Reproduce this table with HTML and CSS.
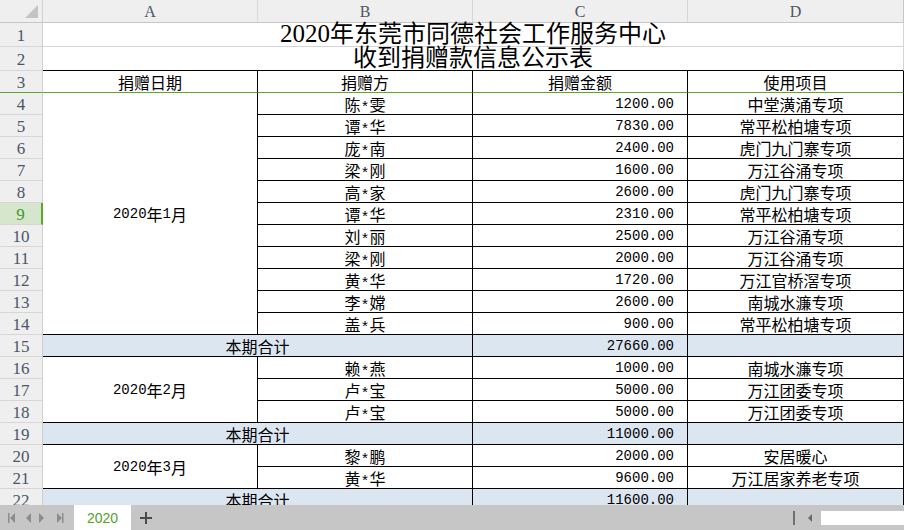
FILE: index.html
```html
<!DOCTYPE html>
<html lang="zh-CN">
<head>
<meta charset="utf-8">
<title>2020</title>
<link rel="stylesheet" href="styles.css">
</head>
<body>
<div class="app">
  <div class="sheet">
    <div class="corner"><span class="tri"></span></div>
    <div class="ch">A</div><div class="ch">B</div><div class="ch">C</div><div class="ch last">D</div>

    <div class="rh">1</div>
    <div class="title t1"><span class="lat">2020</span>年东莞市同德社会工作服务中心</div>
    <div class="rh">2</div>
    <div class="title t2">收到捐赠款信息公示表</div>

    <div class="rh hdr">3</div>
    <div class="c hd">捐赠日期</div><div class="c hd">捐赠方</div><div class="c hd">捐赠金额</div><div class="c hd">使用项目</div>

    <div class="rh">4</div>
    <div class="c date span11"><span class="n">2020</span>年<span class="n">1</span>月</div>
    <div class="c ctr">陈<span class="ast">*</span>雯</div><div class="c amt"><span class="n">1200.00</span></div><div class="c ctr">中堂潢涌专项</div>
    <div class="rh">5</div>
    <div class="c ctr">谭<span class="ast">*</span>华</div><div class="c amt"><span class="n">7830.00</span></div><div class="c ctr">常平松柏塘专项</div>
    <div class="rh">6</div>
    <div class="c ctr">庞<span class="ast">*</span>南</div><div class="c amt"><span class="n">2400.00</span></div><div class="c ctr">虎门九门寨专项</div>
    <div class="rh">7</div>
    <div class="c ctr">梁<span class="ast">*</span>刚</div><div class="c amt"><span class="n">1600.00</span></div><div class="c ctr">万江谷涌专项</div>
    <div class="rh">8</div>
    <div class="c ctr">高<span class="ast">*</span>家</div><div class="c amt"><span class="n">2600.00</span></div><div class="c ctr">虎门九门寨专项</div>
    <div class="rh sel">9</div>
    <div class="c ctr">谭<span class="ast">*</span>华</div><div class="c amt"><span class="n">2310.00</span></div><div class="c ctr">常平松柏塘专项</div>
    <div class="rh">10</div>
    <div class="c ctr">刘<span class="ast">*</span>丽</div><div class="c amt"><span class="n">2500.00</span></div><div class="c ctr">万江谷涌专项</div>
    <div class="rh">11</div>
    <div class="c ctr">梁<span class="ast">*</span>刚</div><div class="c amt"><span class="n">2000.00</span></div><div class="c ctr">万江谷涌专项</div>
    <div class="rh">12</div>
    <div class="c ctr">黄<span class="ast">*</span>华</div><div class="c amt"><span class="n">1720.00</span></div><div class="c ctr">万江官桥滘专项</div>
    <div class="rh">13</div>
    <div class="c ctr">李<span class="ast">*</span>嫦</div><div class="c amt"><span class="n">2600.00</span></div><div class="c ctr">南城水濂专项</div>
    <div class="rh">14</div>
    <div class="c ctr">盖<span class="ast">*</span>兵</div><div class="c amt"><span class="n">900.00</span></div><div class="c ctr">常平松柏塘专项</div>

    <div class="rh">15</div>
    <div class="c sub label">本期合计</div><div class="c sub amt"><span class="n">27660.00</span></div><div class="c sub"></div>

    <div class="rh">16</div>
    <div class="c date span3"><span class="n">2020</span>年<span class="n">2</span>月</div>
    <div class="c ctr">赖<span class="ast">*</span>燕</div><div class="c amt"><span class="n">1000.00</span></div><div class="c ctr">南城水濂专项</div>
    <div class="rh">17</div>
    <div class="c ctr">卢<span class="ast">*</span>宝</div><div class="c amt"><span class="n">5000.00</span></div><div class="c ctr">万江团委专项</div>
    <div class="rh">18</div>
    <div class="c ctr">卢<span class="ast">*</span>宝</div><div class="c amt"><span class="n">5000.00</span></div><div class="c ctr">万江团委专项</div>

    <div class="rh">19</div>
    <div class="c sub label">本期合计</div><div class="c sub amt"><span class="n">11000.00</span></div><div class="c sub"></div>

    <div class="rh">20</div>
    <div class="c date span2"><span class="n">2020</span>年<span class="n">3</span>月</div>
    <div class="c ctr">黎<span class="ast">*</span>鹏</div><div class="c amt"><span class="n">2000.00</span></div><div class="c ctr">安居暖心</div>
    <div class="rh">21</div>
    <div class="c ctr">黄<span class="ast">*</span>华</div><div class="c amt"><span class="n">9600.00</span></div><div class="c ctr">万江居家养老专项</div>

    <div class="rh">22</div>
    <div class="c sub label">本期合计</div><div class="c sub amt"><span class="n">11600.00</span></div><div class="c sub"></div>
  </div>

  <div class="tabbar">
    <div class="nav">
      <svg width="64" height="14" viewBox="0 0 64 14">
        <rect x="8" y="2" width="1.5" height="10" fill="#8c8c8c"/>
        <polygon points="15,2 10,7 15,12" fill="#8c8c8c"/>
        <polygon points="31,2 26,7 31,12" fill="#8c8c8c"/>
        <polygon points="39,2 44,7 39,12" fill="#8c8c8c"/>
        <polygon points="57,2 62,7 57,12" fill="#8c8c8c"/>
        <rect x="62" y="2" width="1.5" height="10" fill="#8c8c8c"/>
      </svg>
    </div>
    <div class="tab">2020</div>
    <div class="add">
      <svg width="14" height="14" viewBox="0 0 14 14">
        <rect x="6" y="1" width="2" height="12" fill="#4a4a4a"/>
        <rect x="1" y="6" width="12" height="2" fill="#4a4a4a"/>
      </svg>
    </div>
    <div class="spacer"></div>
    <div class="hscroll">
      <span class="sep"></span>
      <svg width="8" height="10" viewBox="0 0 8 10"><polygon points="6,1 2,5 6,9" fill="#6a6a6a"/></svg>
      <span class="track"></span>
    </div>
  </div>
</div>
</body>
</html>
```

FILE: styles.css
```css
* { box-sizing: border-box; }
html, body { margin: 0; padding: 0; background: #fff; }
body { width: 904px; height: 530px; overflow: hidden; }

.app {
  display: flex;
  flex-direction: column;
  width: 904px;
  height: 530px;
}

.sheet {
  height: 505px;
  overflow: hidden;
  display: grid;
  grid-template-columns: 43px 215px 215px 215px 216px;
  grid-template-rows: 23px 24px 24px 22px;
  grid-auto-rows: 22px;
  font-family: "Noto Sans CJK SC", sans-serif;
  font-size: 16px;
  color: #000;
}

.corner {
  background: #efefef;
  border-right: 1px solid #cfcfcf;
  border-bottom: 1px solid #c6c6c6;
  position: relative;
}
.tri {
  position: absolute;
  right: 4px;
  bottom: 4px;
  width: 0;
  height: 0;
  border-left: 13px solid transparent;
  border-bottom: 13px solid #c4c4c4;
}

.ch {
  background: #efefef;
  border-right: 1px solid #d6d6d6;
  border-bottom: 1px solid #c6c6c6;
  display: flex;
  align-items: center;
  justify-content: center;
  font-family: "Liberation Serif", serif;
  font-size: 16px;
  color: #4d5566;
  padding-top: 1px;
}
.ch.last { border-right-color: #c6c6c6; }

.rh {
  background: #efefef;
  border-right: 1px solid #cfcfcf;
  border-bottom: 1px solid #d6d6d6;
  display: flex;
  align-items: center;
  justify-content: center;
  font-family: "Liberation Serif", serif;
  font-size: 17px;
  color: #4d5566;
  padding-top: 2px;
}
.rh.hdr { border-bottom: 1px solid #5ea530; }
.rh.sel {
  background: #d6e6cc;
  color: #3d9a25;
  border-right: 2px solid #5ea530;
}

.title {
  grid-column: 2 / 6;
  border-right: 1px solid #d4d4d4;
  display: flex;
  justify-content: center;
  align-items: flex-end;
  font-family: "Liberation Serif", "Noto Sans CJK SC", serif;
  font-size: 24px;
  line-height: 24px;
  white-space: nowrap;
  overflow: visible;
}
.title.t1 { border-bottom: 1px solid #d4d4d4; }
.title.t2 { border-bottom: 1px solid #000; }
.lat { font-family: "Liberation Serif", serif; font-size: 25px; }

.c {
  border-right: 1px solid #000;
  border-bottom: 1px solid #000;
  display: flex;
  align-items: center;
  line-height: 20px;
  white-space: nowrap;
}
.hd { justify-content: center; border-bottom-color: #5ea530; padding-top: 1px; }
.ctr { justify-content: center; }
.amt { justify-content: flex-end; padding-right: 13px; }
.date { justify-content: center; }
.span11 { grid-row: span 11; }
.span3 { grid-row: span 3; }
.span2 { grid-row: span 2; }

.sub { background: #dce6f0; }
.label { grid-column: span 2; justify-content: center; }

.n {
  font-family: "Liberation Mono", monospace;
  font-size: 14px;
}
.ast {
  font-family: "Liberation Mono", monospace;
  font-size: 15px;
  position: relative;
  top: 5px;
}

.tabbar {
  height: 25px;
  background: #c6c6c6;
  display: flex;
  align-items: stretch;
}
.nav {
  width: 74px;
  display: flex;
  align-items: center;
}
.nav svg { display: block; }
.tab {
  width: 57px;
  background: #fff;
  display: flex;
  align-items: center;
  justify-content: center;
  font-family: "Liberation Sans", sans-serif;
  font-size: 14px;
  color: #55a02a;
}
.add {
  width: 30px;
  display: flex;
  align-items: center;
  justify-content: center;
}
.spacer { flex: 1; }
.hscroll {
  width: 111px;
  display: flex;
  align-items: center;
}
.sep {
  width: 2px;
  height: 14px;
  background: #707070;
  margin-right: 11px;
}
.hscroll svg { margin-right: 7px; }
.track {
  flex: 1;
  height: 14px;
  background: #fff;
}
```
